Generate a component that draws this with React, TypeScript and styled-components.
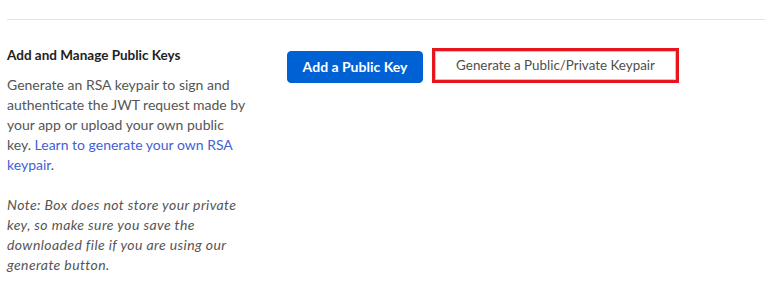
import React from "react";
import styled, { createGlobalStyle } from "styled-components";

const Global = createGlobalStyle`
  html, body { margin: 0; padding: 0; background: #fff; }
  body { font-family: Lato, "Open Sans", "Liberation Sans", sans-serif; }
  * { box-sizing: border-box; }
`;

const Page = styled.div`
  padding: 19px 0 0 7px;
  width: 765px;
`;

const Section = styled.section`
  border-top: 1px solid #e4e4e4;
  padding-top: 25px;
  display: flex;
  align-items: flex-start;
`;

const Info = styled.div`
  width: 240px;
  flex: none;
`;

const Heading = styled.h3`
  margin: 0 0 10px;
  font-size: 13.5px;
  font-weight: 700;
  line-height: 20px;
  color: #222;
`;

const Text = styled.p<{ $italic?: boolean }>`
  margin: 0 0 20px;
  font-size: 14px;
  line-height: 20px;
  color: #555;
  font-style: ${(p) => (p.$italic ? "italic" : "normal")};
  letter-spacing: ${(p) => (p.$italic ? "0.4px" : "0")};
`;

const Link = styled.a`
  color: #3f5fd7;
  text-decoration: none;
`;

const Actions = styled.div`
  margin: 6px 0 0 40px;
  display: flex;
  align-items: flex-start;
  gap: 12px;
`;

const Button = styled.button<{ $primary?: boolean; $highlight?: boolean }>`
  font-family: inherit;
  font-size: ${(p) => (p.$primary ? "14px" : "13.4px")};
  line-height: 1;
  cursor: pointer;
  flex: none;
  border-radius: ${(p) => (p.$primary ? "4px" : "0")};
  height: ${(p) => (p.$primary ? "32px" : "29px")};
  width: ${(p) => (p.$primary ? "136px" : "241px")};
  padding: 0;
  font-weight: ${(p) => (p.$primary ? 700 : 400)};
  color: ${(p) => (p.$primary ? "#fff" : "#4e4e4e")};
  background: ${(p) => (p.$primary ? "#0061d5" : "#fff")};
  border: 1px solid ${(p) => (p.$primary ? "#0061d5" : "#c8c8c8")};
  outline: ${(p) => (p.$highlight ? "3px solid #e8141e" : "none")};
`;

export default function App() {
  return (
    <>
      <Global />
      <Page>
        <Section>
          <Info>
            <Heading>Add and Manage Public Keys</Heading>
            <Text>
              Generate an RSA keypair to sign and authenticate the JWT request
              made by your app or upload your own public key.{" "}
              <Link href="#">Learn to generate your own RSA keypair</Link>.
            </Text>
            <Text $italic>
              Note: Box does not store your private key, so make sure you save
              the downloaded file if you are using our generate button.
            </Text>
          </Info>
          <Actions>
            <Button $primary>Add a Public Key</Button>
            <Button $highlight>Generate a Public/Private Keypair</Button>
          </Actions>
        </Section>
      </Page>
    </>
  );
}
